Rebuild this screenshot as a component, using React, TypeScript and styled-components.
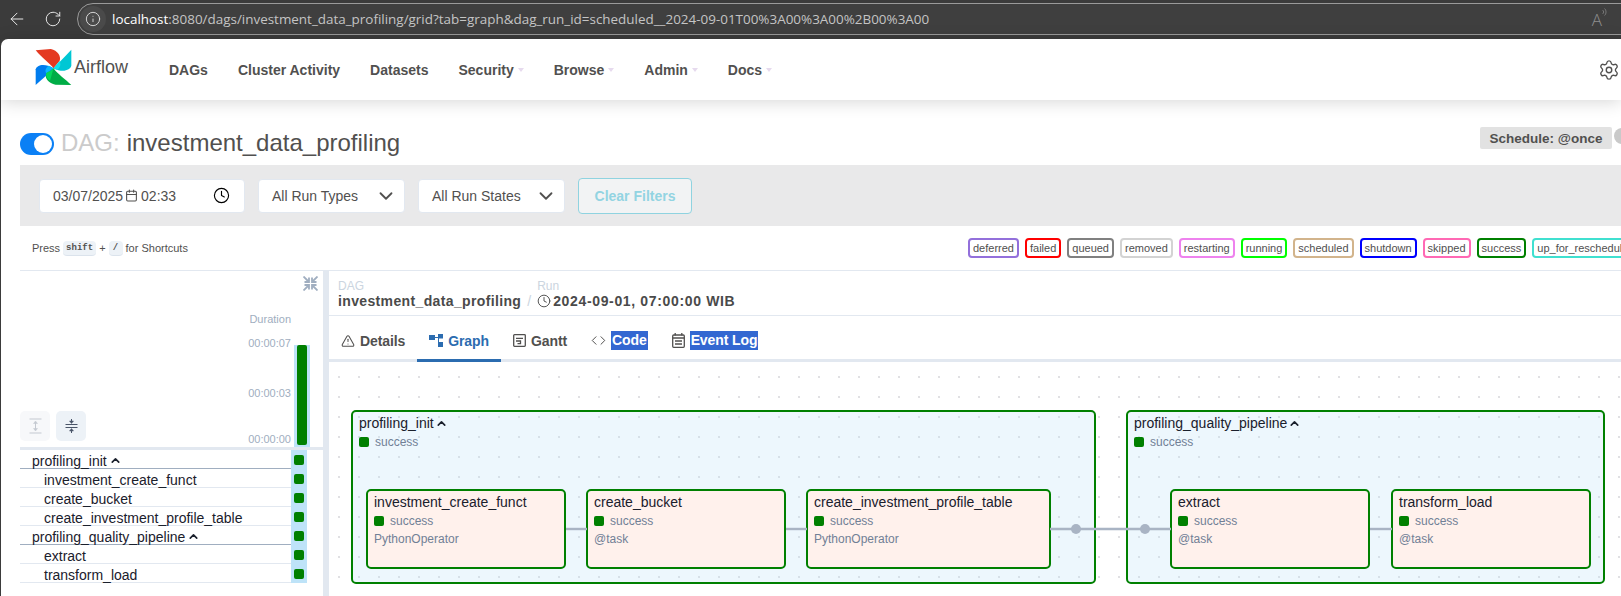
import React from 'react'
import styled, { createGlobalStyle } from 'styled-components'
import {
  ArrowLeft,
  Calendar,
  ChevronDown,
  ChevronUp,
  Clock,
  Code,
  Info,
  RotateCw,
  Settings,
  TriangleAlert,
} from 'lucide-react'

const GlobalStyle = createGlobalStyle`
  html, body {
    margin: 0;
    background: #3b3b3b;
    overflow: hidden;
  }
  * {
    box-sizing: border-box;
  }
`

const Screen = styled.div`
  width: 1621px;
  height: 596px;
  overflow: hidden;
  display: flex;
  flex-direction: column;
  padding-left: 1px;
  font-family: 'Liberation Sans', Arial, sans-serif;
  color: #51504f;
`

const BrowserBar = styled.div`
  height: 39px;
  flex: none;
  display: flex;
  align-items: flex-start;
  padding: 3px 0 0 3px;
  color: #e8e8e8;
`
const BrowserButton = styled.div`
  width: 26px;
  height: 31px;
  display: flex;
  align-items: center;
  justify-content: center;
  margin-right: 10px;
`
const UrlPill = styled.div`
  flex: 1;
  height: 32px;
  margin-right: -20px;
  margin-left: 1px;
  border: 1px solid #9a9a9a;
  border-radius: 16px;
  background: #3f3f3f;
  display: flex;
  align-items: center;
  padding-left: 1px;
`
const SiteInfo = styled.div`
  width: 26px;
  height: 26px;
  border-radius: 50%;
  background: #4a4a4a;
  display: flex;
  align-items: center;
  justify-content: center;
  margin-right: 6px;
  margin-left: 1px;
`
const UrlHost = styled.span`
  font-family: 'Open Sans', sans-serif;
  font-size: 13.45px;
  color: #ffffff;
`
const UrlRest = styled.span`
  font-family: 'Open Sans', sans-serif;
  font-size: 13.45px;
  color: #c4c4c4;
`
const ReadAloud = styled.div`
  margin-left: auto;
  margin-right: 33px;
  display: flex;
  align-items: flex-start;
  font-family: 'Open Sans', sans-serif;
  font-weight: 300;
  font-size: 17px;
  color: #8e8e8e;
`

const Page = styled.div`
  flex: 1;
  min-height: 0;
  background: #ffffff;
  border-top-left-radius: 7px;
  display: flex;
  flex-direction: column;
`

const Nav = styled.nav`
  height: 61px;
  flex: none;
  display: flex;
  align-items: center;
  padding: 0 1px 0 34px;
  box-shadow: 0 2px 16px rgba(0, 0, 0, 0.16);
  position: relative;
`
const Brand = styled.div`
  display: flex;
  align-items: center;
  gap: 2px;
  width: 134px;
  font-size: 18px;
  color: #51504f;
  margin-top: -4px;
`
const NavItems = styled.div`
  display: flex;
  align-items: center;
  gap: 30px;
`
const NavItem = styled.div`
  display: flex;
  align-items: center;
  gap: 4px;
  font-size: 14px;
  font-weight: 700;
  color: #51504f;
`
const Caret = styled.span`
  width: 0;
  height: 0;
  margin-top: 1px;
  border-left: 3.5px solid transparent;
  border-right: 3.5px solid transparent;
  border-top: 4px solid #e6daee;
`
const GearButton = styled.div`
  margin-left: auto;
  display: flex;
  color: #51504f;
`

const DagHeader = styled.div`
  height: 65px;
  flex: none;
  display: flex;
  align-items: flex-start;
  padding: 27px 0 0 19px;
`
const DagTitle = styled.div`
  display: flex;
  align-items: center;
  margin-top: 4px;
  font-size: 24px;
  height: 24px;
`
const Toggle = styled.div`
  width: 34px;
  height: 22px;
  margin-top: 2px;
  border-radius: 11px;
  background: #0b80f5;
  position: relative;
  margin-right: 7px;
  &::after {
    content: '';
    position: absolute;
    right: 2px;
    top: 2px;
    width: 18px;
    height: 18px;
    border-radius: 50%;
    background: #ffffff;
  }
`
const DagLabel = styled.span`
  color: #cbcbcb;
  margin-right: 7px;
`
const ScheduleBadge = styled.div`
  margin-left: auto;
  width: 132px;
  height: 22px;
  border-radius: 2px;
  background: #e2e2e2;
  display: flex;
  align-items: center;
  justify-content: center;
  font-size: 13.5px;
  font-weight: 700;
`
const ExtraBadge = styled.div`
  width: 16px;
  height: 16px;
  margin: 1px -9px 0 2px;
  flex: none;
  border-radius: 50%;
  background: #c9c9c9;
`

const FilterBar = styled.div`
  height: 61px;
  flex: none;
  margin-left: 19px;
  background: #e9e9ea;
  display: flex;
  align-items: center;
  gap: 13px;
  padding-left: 19px;
`
const Field = styled.div<{ $w: number }>`
  width: ${p => p.$w}px;
  height: 34px;
  background: #ffffff;
  border: 1px solid #e2e8f0;
  border-radius: 4px;
  display: flex;
  align-items: center;
  padding: 0 7px 0 13px;
  font-size: 14px;
  color: #51504f;
`
const FieldIcon = styled.span`
  display: flex;
  margin: 0 3px 0 2px;
`
const FieldEnd = styled.span<{ $inset?: number }>`
  margin-left: auto;
  margin-right: ${p => p.$inset ?? 0}px;
  display: flex;
`
const ClearButton = styled.div`
  width: 114px;
  height: 36px;
  border: 1px solid #8fd3e0;
  border-radius: 4px;
  background: #f2f3f4;
  display: flex;
  align-items: center;
  justify-content: center;
  font-size: 14px;
  font-weight: 700;
  color: #93d4e2;
`

const ShortcutRow = styled.div`
  height: 45px;
  flex: none;
  margin-left: 19px;
  border-bottom: 1px solid #e2e8f0;
  display: flex;
  align-items: flex-start;
  padding: 12px 0 0 12px;
`
const ShortcutText = styled.div`
  width: 936px;
  flex: none;
  display: flex;
  align-items: center;
  height: 20px;
  gap: 3px;
  font-size: 11px;
`
const Kbd = styled.span<{ $w: number }>`
  width: ${p => p.$w}px;
  height: 15px;
  border-radius: 4px;
  background: #edf2f7;
  border-bottom: 1px solid #dbe3ec;
  display: flex;
  align-items: center;
  justify-content: center;
  font-family: 'Liberation Mono', monospace;
  font-size: 9px;
  font-weight: 700;
`
const Legend = styled.div`
  display: flex;
  gap: 6px;
  flex: none;
`
const LegendChip = styled.div<{ $color: string }>`
  height: 20px;
  padding: 0 3px;
  border: 2px solid ${p => p.$color};
  border-radius: 4px;
  display: flex;
  align-items: center;
  font-size: 11px;
  white-space: nowrap;
`

const Main = styled.div`
  flex: 1;
  min-height: 0;
  display: flex;
  margin-left: 19px;
`

const GridPanel = styled.div`
  width: 303px;
  flex: none;
  display: flex;
  flex-direction: column;
`
const ChartArea = styled.div`
  height: 176px;
  flex: none;
  position: relative;
  display: flex;
  align-items: flex-end;
`
const CollapseButton = styled.div`
  position: absolute;
  top: 5px;
  right: 5px;
  display: flex;
`
const TreeButtons = styled.div`
  display: flex;
  gap: 6px;
  padding-bottom: 6px;
  width: 224px;
`
const TreeButton = styled.div<{ $disabled?: boolean }>`
  width: 30px;
  height: 30px;
  border-radius: 5px;
  background: ${p => (p.$disabled ? '#f7f8fa' : '#edf2f7')};
  display: flex;
  align-items: center;
  justify-content: center;
`
const DurationAxis = styled.div`
  width: 47px;
  height: 176px;
  flex: none;
  display: flex;
  flex-direction: column;
  align-items: flex-end;
  padding-top: 42px;
  font-size: 11px;
  line-height: 13px;
  color: #a0aec0;
`
const DurationTick = styled.div<{ $gap: number }>`
  margin-top: ${p => p.$gap}px;
`
const DurationColumn = styled.div`
  width: 16px;
  height: 102px;
  flex: none;
  margin-left: 3px;
  background: #bee3f8;
  display: flex;
  justify-content: center;
`
const DurationBar = styled.div`
  width: 10px;
  height: 100px;
  background: #008000;
  border-radius: 2px;
`
const PanelRule = styled.div`
  height: 3px;
  flex: none;
  background: #e2e8f0;
`
const TreeRow = styled.div`
  height: 19px;
  flex: none;
  display: flex;
  width: 287px;
`
const TreeName = styled.div<{ $group?: boolean }>`
  flex: 1;
  display: flex;
  align-items: center;
  gap: 2px;
  font-size: 14px;
  color: #1a202c;
  padding-top: 3px;
  padding-left: ${p => (p.$group ? 12 : 24)}px;
  border-bottom: 1px solid ${p => (p.$group ? '#a0aec0' : '#e2e8f0')};
`
const TreeCell = styled.div`
  width: 16px;
  flex: none;
  background: #bee3f8;
  display: flex;
  align-items: center;
  justify-content: center;
`
const StatusSquare = styled.span`
  width: 10px;
  height: 10px;
  flex: none;
  border-radius: 2px;
  background: #008000;
`

const Splitter = styled.div`
  width: 6px;
  flex: none;
  background: #e2e8f0;
`

const DetailsPanel = styled.div`
  flex: 1;
  min-width: 0;
  display: flex;
  flex-direction: column;
`
const Breadcrumb = styled.div`
  height: 45px;
  flex: none;
  border-bottom: 1px solid #e2e8f0;
  display: flex;
  align-items: flex-start;
  padding: 9px 0 0 9px;
`
const Crumb = styled.div`
  display: flex;
  flex-direction: column;
`
const CrumbLabel = styled.div`
  font-size: 12px;
  line-height: 13px;
  color: #cbd5e0;
`
const CrumbValue = styled.div<{ $spacing: number }>`
  display: flex;
  align-items: center;
  gap: 2px;
  font-size: 14px;
  line-height: 16px;
  font-weight: 700;
  letter-spacing: ${p => p.$spacing}px;
  color: #4a4a4a;
`
const CrumbSlash = styled.div`
  margin: 13px 6px 0 6px;
  font-size: 14px;
  line-height: 16px;
  color: #cbd5e0;
`
const Tabs = styled.div`
  height: 46px;
  flex: none;
  display: flex;
  border-bottom: 3px solid #e2e8f0;
`
const Tab = styled.div<{ $active?: boolean }>`
  height: 46px;
  padding: 6px 12px 0;
  display: flex;
  align-items: center;
  gap: 5px;
  font-size: 14px;
  font-weight: 700;
  letter-spacing: -0.1px;
  color: ${p => (p.$active ? '#2b6cb0' : '#51504f')};
  border-bottom: 3px solid ${p => (p.$active ? '#2b6cb0' : 'transparent')};
`
const Highlight = styled.span`
  background: #3367d1;
  color: #ffffff;
  padding: 2px 1px;
  line-height: 15px;
`

const GraphCanvas = styled.div`
  flex: 1;
  min-height: 0;
  position: relative;
  background-image: radial-gradient(circle, #bcbcc2 0.6px, transparent 0.8px);
  background-size: 20px 20px;
  background-position: 0 5px;
`
const GroupNode = styled.div<{ $x: number; $w: number }>`
  position: absolute;
  left: ${p => p.$x}px;
  top: 48px;
  width: ${p => p.$w}px;
  height: 174px;
  border: 2px solid #008000;
  border-radius: 5px;
  background: rgba(190, 227, 248, 0.27);
  padding: 3px 6px;
`
const TaskNode = styled.div<{ $x: number; $w: number }>`
  position: absolute;
  left: ${p => p.$x}px;
  top: 77px;
  width: ${p => p.$w}px;
  height: 80px;
  border: 2px solid #008000;
  border-radius: 5px;
  background: #fff1ec;
  padding: 3px 5px 3px 6px;
`
const NodeTitle = styled.div`
  display: flex;
  align-items: center;
  gap: 1px;
  height: 16px;
  font-size: 14px;
  color: #1a202c;
`
const NodeStatus = styled.div`
  display: flex;
  align-items: center;
  gap: 6px;
  height: 14px;
  margin-top: 4px;
  font-size: 12px;
  color: #718096;
`
const NodeOperator = styled.div`
  margin-top: 4px;
  height: 14px;
  line-height: 14px;
  font-size: 12px;
  color: #718096;
`
const EdgeLayer = styled.svg`
  position: absolute;
  left: 0;
  top: 0;
  width: 100%;
  height: 100%;
  pointer-events: none;
`

const legend: [string, string][] = [
  ['deferred', '#9370db'],
  ['failed', '#ff0000'],
  ['queued', '#808080'],
  ['removed', '#d3d3d3'],
  ['restarting', '#ee82ee'],
  ['running', '#00ff00'],
  ['scheduled', '#d2b48c'],
  ['shutdown', '#0000ff'],
  ['skipped', '#ff69b4'],
  ['success', '#008000'],
  ['up_for_reschedule', '#40e0d0'],
]

const tree = [
  { name: 'profiling_init', group: true },
  { name: 'investment_create_funct' },
  { name: 'create_bucket' },
  { name: 'create_investment_profile_table' },
  { name: 'profiling_quality_pipeline', group: true },
  { name: 'extract' },
  { name: 'transform_load' },
]

const Logo = () => (
  <svg width="37" height="37" viewBox="105 146 110 110">
    <path d="M107 150 L152 146 C172 150 184 168 178 182 L160 203 C150 190 125 172 107 150Z" fill="#e43921" />
    <path d="M213 148 L213 196 C210 208 190 218 160 204 C176 186 196 166 213 148Z" fill="#00c7d4" />
    <path d="M213 253 L166 252 C146 248 132 232 138 218 L160 203 C172 220 196 236 213 253Z" fill="#00ad46" />
    <path d="M107 253 L107 206 C110 194 132 186 160 203 C144 220 124 238 107 253Z" fill="#017cee" />
    <path d="M160 203 L178 182 C182 190 182 198 172 208Z" fill="#11e1ee" />
    <path d="M160 203 L138 218 C134 212 136 202 146 196Z" fill="#0cb6ff" />
    <path d="M160 203 C150 212 142 214 138 218 C136 226 142 236 150 240Z" fill="#04d659" />
  </svg>
)

const CollapseIcon = () => (
  <svg width="15" height="15" viewBox="0 0 15 15" fill="none" stroke="#a0aec0" strokeWidth="1.8">
    <path d="M0.5 0.5 L5.5 5.5 M6 1.5 V6 H1.5" />
    <path d="M14.5 0.5 L9.5 5.5 M9 1.5 V6 H13.5" />
    <path d="M0.5 14.5 L5.5 9.5 M6 13.5 V9 H1.5" />
    <path d="M14.5 14.5 L9.5 9.5 M9 13.5 V9 H13.5" />
  </svg>
)

const ExpandAllIcon = () => (
  <svg width="13" height="16" viewBox="0 0 13 16" fill="#c4c9d1" stroke="#c4c9d1">
    <path d="M0.5 1 H12.5 M0.5 15 H12.5 M6.5 4 V12" strokeWidth="1" />
    <path d="M6.5 3 L4.5 5.5 H8.5Z M6.5 13 L4.5 10.5 H8.5Z" strokeWidth="0.5" />
  </svg>
)

const CollapseAllIcon = () => (
  <svg width="13" height="16" viewBox="0 0 13 16" fill="#4a5568" stroke="#4a5568">
    <path d="M0.5 6.5 H12.5 M0.5 9.5 H12.5 M6.5 1 V5 M6.5 11 V15" strokeWidth="1" />
    <path d="M6.5 5.5 L4.5 3 H8.5Z M6.5 10.5 L4.5 13 H8.5Z" strokeWidth="0.5" />
  </svg>
)

const GraphIcon = () => (
  <svg width="14" height="13" viewBox="0 0 14 13" fill="#2b6cb0">
    <rect x="0" y="1" width="6" height="5" />
    <rect x="9" y="0" width="5" height="4.5" />
    <rect x="9" y="8" width="5" height="5" />
    <path d="M6 3 H9 V2 H10 V9 H9 V4 H6Z" />
  </svg>
)

const GanttIcon = () => (
  <svg width="13" height="13" viewBox="0 0 13 13" fill="none" stroke="#51504f" strokeWidth="1.3">
    <rect x="0.7" y="0.7" width="11.6" height="11.6" rx="0.8" />
    <path d="M3 4.3 H10 M3 7 H7.5 V9.6 H4.5" />
  </svg>
)

const EventLogIcon = () => (
  <svg width="13" height="15" viewBox="0 0 13 15" fill="none" stroke="#51504f" strokeWidth="1.3">
    <rect x="0.7" y="2" width="11.6" height="12.3" rx="1" />
    <path d="M3.2 0 V2.5 M9.8 0 V2.5 M0.7 5 H12.3 M3 8 H10 M3 11 H10" />
  </svg>
)

const Success = () => (
  <NodeStatus>
    <StatusSquare />
    success
  </NodeStatus>
)

const App = () => (
  <Screen>
    <GlobalStyle />
    <BrowserBar>
      <BrowserButton>
        <ArrowLeft size={20} strokeWidth={1.2} />
      </BrowserButton>
      <BrowserButton>
        <RotateCw size={18} strokeWidth={1.3} />
      </BrowserButton>
      <UrlPill>
        <SiteInfo>
          <Info size={16} strokeWidth={1.3} />
        </SiteInfo>
        <UrlHost>localhost</UrlHost>
        <UrlRest>
          :8080/dags/investment_data_profiling/grid?tab=graph&amp;dag_run_id=scheduled__2024-09-01T00%3A00%3A00%2B00%3A00
        </UrlRest>
        <ReadAloud>
          A
          <svg width="5" height="8" viewBox="0 0 5 8" fill="none" stroke="#8e8e8e" strokeWidth="0.7">
            <path d="M0.5 2 C2 3 2 5 0.5 6 M2.5 0.5 C4.5 2 4.5 6 2.5 7.5" />
          </svg>
        </ReadAloud>
      </UrlPill>
    </BrowserBar>
    <Page>
      <Nav>
        <Brand>
          <Logo />
          Airflow
        </Brand>
        <NavItems>
          <NavItem>DAGs</NavItem>
          <NavItem>Cluster Activity</NavItem>
          <NavItem>Datasets</NavItem>
          <NavItem>
            Security
            <Caret />
          </NavItem>
          <NavItem>
            Browse
            <Caret />
          </NavItem>
          <NavItem>
            Admin
            <Caret />
          </NavItem>
          <NavItem>
            Docs
            <Caret />
          </NavItem>
        </NavItems>
        <GearButton>
          <Settings size={22} strokeWidth={1.5} />
        </GearButton>
      </Nav>

      <DagHeader>
        <DagTitle>
          <Toggle />
          <DagLabel>DAG:</DagLabel>
          investment_data_profiling
        </DagTitle>
        <ScheduleBadge>Schedule: @once</ScheduleBadge>
        <ExtraBadge />
      </DagHeader>

      <FilterBar>
        <Field $w={206}>
          03/07/2025
          <FieldIcon>
            <Calendar size={13} />
          </FieldIcon>
          02:33
          <FieldEnd $inset={7}>
            <Clock size={17} color="#000" strokeWidth={1.6} />
          </FieldEnd>
        </Field>
        <Field $w={147}>
          All Run Types
          <FieldEnd>
            <ChevronDown size={22} strokeWidth={2} />
          </FieldEnd>
        </Field>
        <Field $w={147}>
          All Run States
          <FieldEnd>
            <ChevronDown size={22} strokeWidth={2} />
          </FieldEnd>
        </Field>
        <ClearButton>Clear Filters</ClearButton>
      </FilterBar>

      <ShortcutRow>
        <ShortcutText>
          Press <Kbd $w={33}>shift</Kbd> + <Kbd $w={14}>/</Kbd> for Shortcuts
        </ShortcutText>
        <Legend>
          {legend.map(([name, color]) => (
            <LegendChip key={name} $color={color}>
              {name}
            </LegendChip>
          ))}
        </Legend>
      </ShortcutRow>

      <Main>
        <GridPanel>
          <ChartArea>
            <CollapseButton>
              <CollapseIcon />
            </CollapseButton>
            <TreeButtons>
              <TreeButton $disabled>
                <ExpandAllIcon />
              </TreeButton>
              <TreeButton>
                <CollapseAllIcon />
              </TreeButton>
            </TreeButtons>
            <DurationAxis>
              Duration
              <DurationTick $gap={11}>00:00:07</DurationTick>
              <DurationTick $gap={37}>00:00:03</DurationTick>
              <DurationTick $gap={33}>00:00:00</DurationTick>
            </DurationAxis>
            <DurationColumn>
              <DurationBar />
            </DurationColumn>
          </ChartArea>
          <PanelRule />
          {tree.map(row => (
            <TreeRow key={row.name}>
              <TreeName $group={row.group}>
                {row.name}
                {row.group && <ChevronUp size={13} strokeWidth={3} color="#1a202c" />}
              </TreeName>
              <TreeCell>
                <StatusSquare />
              </TreeCell>
            </TreeRow>
          ))}
        </GridPanel>

        <Splitter />

        <DetailsPanel>
          <Breadcrumb>
            <Crumb>
              <CrumbLabel>DAG</CrumbLabel>
              <CrumbValue $spacing={0.36}>investment_data_profiling</CrumbValue>
            </Crumb>
            <CrumbSlash>/</CrumbSlash>
            <Crumb>
              <CrumbLabel>Run</CrumbLabel>
              <CrumbValue $spacing={0.65}>
                <Clock size={14} strokeWidth={1.6} />
                2024-09-01, 07:00:00 WIB
              </CrumbValue>
            </Crumb>
          </Breadcrumb>
          <Tabs>
            <Tab>
              <TriangleAlert size={14} strokeWidth={1.8} />
              Details
            </Tab>
            <Tab $active>
              <GraphIcon />
              Graph
            </Tab>
            <Tab>
              <GanttIcon />
              Gantt
            </Tab>
            <Tab>
              <Code size={15} strokeWidth={1.6} />
              <Highlight>Code</Highlight>
            </Tab>
            <Tab>
              <EventLogIcon />
              <Highlight>Event Log</Highlight>
            </Tab>
          </Tabs>
          <GraphCanvas>
            <GroupNode $x={22} $w={745}>
              <NodeTitle>
                profiling_init
                <ChevronUp size={13} strokeWidth={3} />
              </NodeTitle>
              <Success />
              <TaskNode $x={13} $w={200}>
                <NodeTitle>investment_create_funct</NodeTitle>
                <Success />
                <NodeOperator>PythonOperator</NodeOperator>
              </TaskNode>
              <TaskNode $x={233} $w={200}>
                <NodeTitle>create_bucket</NodeTitle>
                <Success />
                <NodeOperator>@task</NodeOperator>
              </TaskNode>
              <TaskNode $x={453} $w={245}>
                <NodeTitle>create_investment_profile_table</NodeTitle>
                <Success />
                <NodeOperator>PythonOperator</NodeOperator>
              </TaskNode>
            </GroupNode>
            <GroupNode $x={797} $w={479}>
              <NodeTitle>
                profiling_quality_pipeline
                <ChevronUp size={13} strokeWidth={3} />
              </NodeTitle>
              <Success />
              <TaskNode $x={42} $w={200}>
                <NodeTitle>extract</NodeTitle>
                <Success />
                <NodeOperator>@task</NodeOperator>
              </TaskNode>
              <TaskNode $x={263} $w={200}>
                <NodeTitle>transform_load</NodeTitle>
                <Success />
                <NodeOperator>@task</NodeOperator>
              </TaskNode>
            </GroupNode>
            <EdgeLayer>
              <g stroke="#a9b4c4" strokeWidth="2.4">
                <line x1="237" y1="167" x2="258" y2="167" />
                <line x1="457" y1="167" x2="478" y2="167" />
                <line x1="721" y1="167" x2="842" y2="167" />
                <line x1="1041" y1="167" x2="1063" y2="167" />
              </g>
              <circle cx="747" cy="167" r="5" fill="#a9b4c4" />
              <circle cx="816" cy="167" r="5" fill="#a9b4c4" />
            </EdgeLayer>
          </GraphCanvas>
        </DetailsPanel>
      </Main>
    </Page>
  </Screen>
)

export default App
